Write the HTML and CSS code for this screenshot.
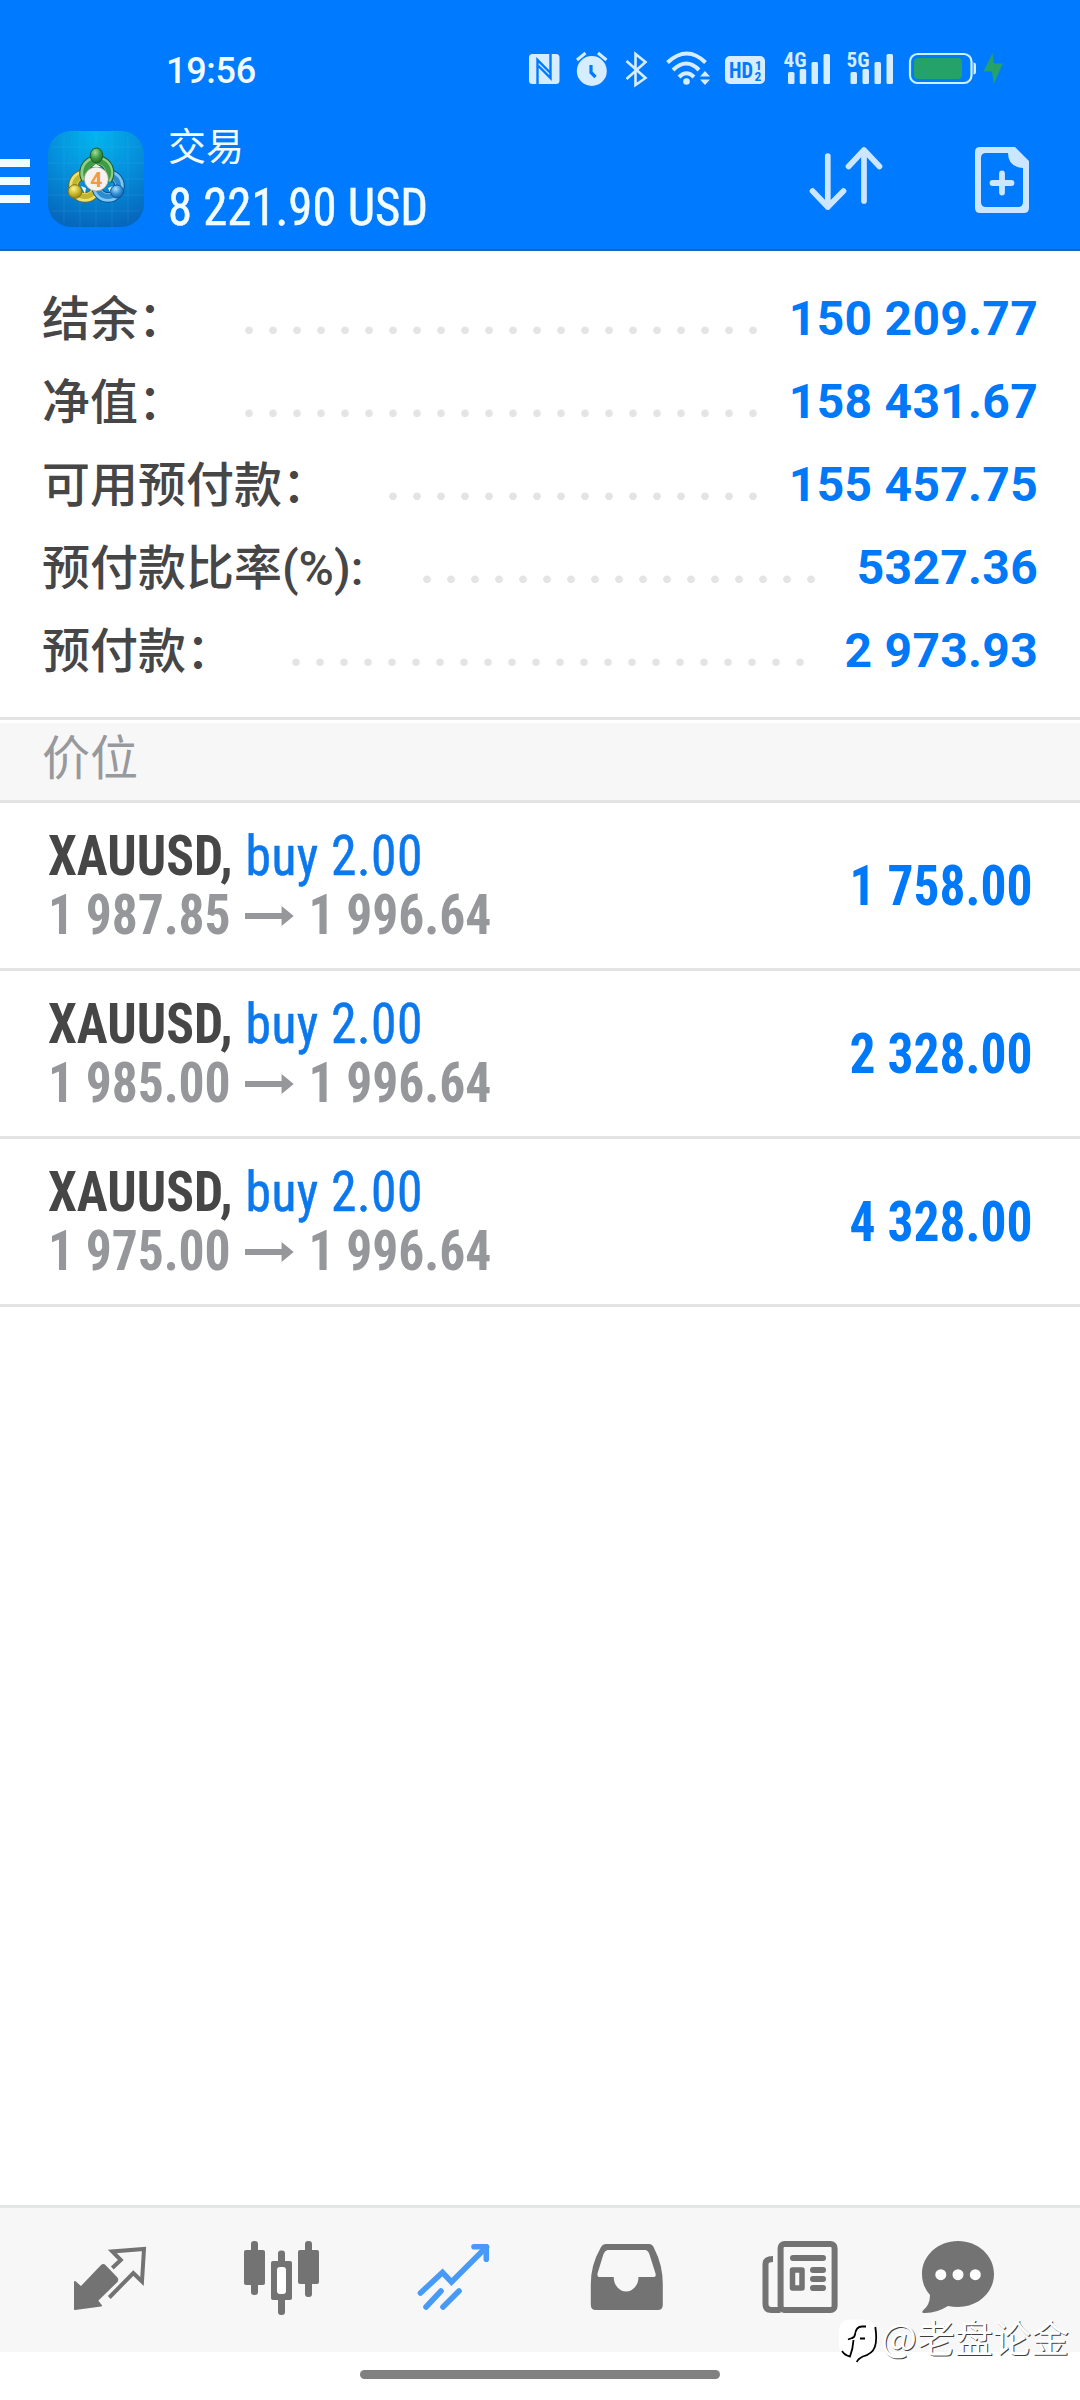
FILE: index.html
```html
<!DOCTYPE html>
<html lang="zh-CN">
<head>
<meta charset="utf-8">
<title>交易</title>
<link rel="stylesheet" href="styles.css">
</head>
<body>
<div class="app">
  <header class="header">
    <div class="status">
      <span class="status-time">19:56</span>
      <svg class="status-icons" width="480" height="40" viewBox="526 48 480 40" fill="#d6ecff">
        <rect x="529" y="54" width="30.5" height="30" rx="3.5"/>
        <path d="M537.5 84V60l13.500 13.500M550.500 54v24l-12-12" fill="none" stroke="#007aff" stroke-width="2.400"/>
        <ellipse cx="591.800" cy="71" rx="15" ry="15"/>
        <path d="M577 60l8.500-7M606.500 60l-8.500-7" stroke="#d6ecff" stroke-width="3"/>
        <path d="M591 65v7.500l4.500 4.500" fill="none" stroke="#007aff" stroke-width="3.200"/>
        <path d="M626.500 61l19 17L635.500 85V54l10 8-19 17" fill="none" stroke="#d6ecff" stroke-width="2.600"/>
        <g fill="none" stroke="#d6ecff" stroke-width="4">
          <path d="M667.500 62.500q19.500-18 38 0M673 70q13.500-13 26 0M679 77q7.500-7.500 15 0"/>
        </g>
        <circle cx="686.500" cy="81.500" r="3.300"/>
        <path d="M705 71l5 5.500h-10zM705 85l5-5.500h-10z"/>
        <rect x="725" y="56" width="40" height="28" rx="5"/>
        <text class="tiny" x="729" y="78" font-size="22" fill="#007aff" textLength="24" lengthAdjust="spacingAndGlyphs">HD</text>
        <text class="tiny" x="755" y="69.500" font-size="13.500" fill="#007aff">1</text>
        <text class="tiny" x="754.500" y="81" font-size="13.500" fill="#007aff">2</text>
        <text class="tiny" x="783.500" y="66.500" font-size="20" textLength="23" lengthAdjust="spacingAndGlyphs">4G</text>
        <rect x="788" y="72" width="6.500" height="12" rx="1.500"/>
        <rect x="799.700" y="69" width="6.500" height="15" rx="1.500"/>
        <rect x="811.500" y="62" width="6.500" height="22" rx="1.500"/>
        <rect x="823.500" y="54" width="6.500" height="30" rx="1.500"/>
        <text class="tiny" x="846.500" y="66.500" font-size="20" textLength="23" lengthAdjust="spacingAndGlyphs">5G</text>
        <rect x="850.500" y="72" width="6.500" height="12" rx="1.500"/>
        <rect x="862.500" y="69" width="6.500" height="15" rx="1.500"/>
        <rect x="874.500" y="62" width="6.500" height="22" rx="1.500"/>
        <rect x="886.500" y="54" width="6.500" height="30" rx="1.500"/>
        <rect x="910" y="54" width="61.500" height="29" rx="7.500" fill="none" stroke="#c8f2ff" stroke-width="2.200"/>
        <rect x="914" y="58" width="48" height="21" rx="4" fill="#25a269"/>
        <path d="M973.500 62.500q2.500 0 2.500 3v6q0 3-2.500 3z"/>
        <path d="M992.500 53l-9 18.500h8.500L993.800 84l9-20.500h-9z" fill="#25a269"/>
      </svg>
    </div>
    <div class="bar">
      <svg class="menu" width="30" height="48" viewBox="0 157 30 48" fill="#f0fcff"><path d="M0 159h30v8H0zM0 177h30v8H0zM0 195h30v8H0z"/></svg>
      <svg class="logo" width="96" height="96" viewBox="0 0 96 96">
        <defs>
          <radialGradient id="sky" cx=".5" cy=".05" r=".95"><stop offset="0" stop-color="#02b5ec"/><stop offset=".5" stop-color="#0590dc"/><stop offset="1" stop-color="#0668bd"/></radialGradient>
          <radialGradient id="green" cx=".4" cy=".3" r=".8"><stop offset="0" stop-color="#a5dc9d"/><stop offset=".5" stop-color="#3c9b42"/><stop offset="1" stop-color="#14651f"/></radialGradient>
          <radialGradient id="gold" cx=".4" cy=".3" r=".8"><stop offset="0" stop-color="#fff58c"/><stop offset=".5" stop-color="#c9b92c"/><stop offset="1" stop-color="#857413"/></radialGradient>
          <radialGradient id="blue" cx=".4" cy=".3" r=".8"><stop offset="0" stop-color="#a8e0ff"/><stop offset=".5" stop-color="#3593d6"/><stop offset="1" stop-color="#0b559d"/></radialGradient>
        </defs>
        <rect width="96" height="96" rx="23" fill="url(#sky)"/>
        <path d="M16 4v88M32 0v96M48 0v96M64 0v96M80 4v88M4 16h88M0 32h96M0 48h96M0 64h96M4 80h88" stroke="#55b8ee" stroke-opacity=".16" fill="none"/>
        <g fill="none">
          <circle cx="37" cy="55" r="11.500" stroke="#716b1c" stroke-width="10.500"/>
          <circle cx="37" cy="55" r="11.500" stroke="#ece06a" stroke-width="8.500"/>
          <circle cx="37" cy="55" r="10.500" stroke="#c4b52e" stroke-width="5"/>
          <circle cx="60" cy="55" r="11.500" stroke="#0b4e8e" stroke-width="10.500"/>
          <circle cx="60" cy="55" r="11.500" stroke="#7cc8f3" stroke-width="8.500"/>
          <circle cx="60" cy="55" r="10.500" stroke="#2d8bd0" stroke-width="5"/>
          <path d="M38 48a12.500 12.500 0 1 1 21 1" stroke="#1b5d2a" stroke-width="10"/>
          <path d="M38 48a12.500 12.500 0 1 1 21 1" stroke="#8fcd88" stroke-width="8"/>
          <path d="M39 47a11.500 11.500 0 1 1 19 2" stroke="#3f9c42" stroke-width="5"/>
        </g>
        <path d="M44 36l4-3 5 3zM33 55l5 2-1 6zM60 57l5-2-2 8z" fill="#eefae0"/>
        <ellipse cx="48.500" cy="24.500" rx="6.300" ry="7.500" fill="url(#green)" stroke="#1b5d2a"/>
        <circle cx="27" cy="60.500" r="6.800" fill="url(#gold)" stroke="#857413"/>
        <circle cx="69" cy="60.500" r="6.500" fill="url(#blue)" stroke="#0b559d"/>
        <circle cx="48.300" cy="48" r="12" fill="#f6f2f0" stroke="#9b8f78" stroke-width=".6"/>
        <text class="four" x="48.300" y="55.500" text-anchor="middle" font-size="21" fill="#f19a45">4</text>
      </svg>
      <div class="titles">
        <div class="title">交易</div>
        <div class="profit">8 221.90 USD</div>
      </div>
      <svg class="sort" width="76" height="66" viewBox="808 146 76 66" fill="none" stroke="#cce6ff" stroke-width="5.700" stroke-linecap="round" stroke-linejoin="round"><path d="M827.800 156v51M812.500 191l15.300 16 15.700-16M864 201V150M848.500 166.500L864 150l15.500 16.500"/></svg>
      <svg class="new" width="54" height="66" viewBox="975 146 54 66"><path fill="#cce6ff" fill-rule="evenodd" d="M980 146h35l14 14v47q0 5-5 5h-44q-5 0-5-5v-56q0-5 5-5zm6 6q-5 0-5 5v44q0 5 5 5h32q5 0 5-5v-34q-15-1-15-15z"/><path d="M1002 172.500v19M992.500 182h19" stroke="#cce6ff" stroke-width="5.800" stroke-linecap="round"/></svg>
    </div>
  </header>

  <section class="account">
    <div class="row"><span>结余：</span><i class="dots" style="width:528px"></i><b class="wide">150 209.77</b></div>
    <div class="row"><span>净值：</span><i class="dots" style="width:528px"></i><b class="wide">158 431.67</b></div>
    <div class="row"><span>可用预付款：</span><i class="dots" style="width:384px"></i><b class="wide">155 457.75</b></div>
    <div class="row"><span>预付款比率(%):</span><i class="dots" style="width:408px"></i><b class="narrow">5327.36</b></div>
    <div class="row"><span>预付款：</span><i class="dots" style="width:528px"></i><b class="medium">2 973.93</b></div>
  </section>

  <h2 class="section">价位</h2>

  <main class="orders">
    <article class="order">
      <div><div class="line"><b>XAUUSD,</b> <span class="side">buy 2.00</span></div>
      <div class="line prices">1 987.85 <svg class="arrow" width="52" height="20" viewBox="0 0 52 20"><path d="M0 7h39V0l13 10-13 10v-7H0z"/></svg> 1 996.64</div></div>
      <div class="gain">1 758.00</div>
    </article>
    <article class="order">
      <div><div class="line"><b>XAUUSD,</b> <span class="side">buy 2.00</span></div>
      <div class="line prices">1 985.00 <svg class="arrow" width="52" height="20" viewBox="0 0 52 20"><path d="M0 7h39V0l13 10-13 10v-7H0z"/></svg> 1 996.64</div></div>
      <div class="gain">2 328.00</div>
    </article>
    <article class="order">
      <div><div class="line"><b>XAUUSD,</b> <span class="side">buy 2.00</span></div>
      <div class="line prices">1 975.00 <svg class="arrow" width="52" height="20" viewBox="0 0 52 20"><path d="M0 7h39V0l13 10-13 10v-7H0z"/></svg> 1 996.64</div></div>
      <div class="gain">4 328.00</div>
    </article>
  </main>

  <nav class="tabs">
    <svg width="172" height="144" viewBox="23 2208 172 144"><path d="M75 2282l6 5.500 20.500-21.500q1.800-1.700 3.500 0l11.500 12q1.500 1.700 0 3.500L97 2300.500l4 5-26 3.500z" fill="#737373" stroke="#737373" stroke-width="2" stroke-linejoin="round"/><path d="M112.300 2268l8.500-8-8.500-8.500 31.700-2.500-2 32.500-8.700-8.500-24 24.500" fill="none" stroke="#737373" stroke-width="4"/></svg>
    <svg width="172" height="144" viewBox="195 2208 172 144" fill="#737373"><rect x="251" y="2241" width="7" height="54" rx="3"/><rect x="244" y="2250" width="21" height="35" rx="2"/><rect x="305" y="2241" width="7" height="56" rx="3"/><rect x="298" y="2250" width="21" height="34" rx="2"/><rect x="278" y="2250.500" width="7" height="64.500" rx="3"/><rect x="271" y="2261" width="21" height="39" rx="2"/><rect x="277" y="2267" width="9" height="27" rx="3" fill="#fff"/></svg>
    <svg width="173" height="144" viewBox="367 2208 173 144" fill="none" stroke="#479bf6" stroke-width="5.600" stroke-linecap="round"><path d="M420.500 2293l22-20.500 9 9.500 35-35"/><path d="M474 2246.800h12.300v12.500" stroke-linejoin="round"/><path d="M426 2307l15-16M443 2307l16-16"/></svg>
    <svg width="177" height="144" viewBox="540 2208 177 144"><path fill="#737373" fill-rule="evenodd" d="M606 2244h43q3.500 0 5 4 8.800 17 8.800 36v21q0 5-5 5h-62q-5 0-5-5v-21q0-19 9.700-36 2-4 5.500-4zm1.500 6q-2.500.5-4 4l-6 19.500q-.5 3.500 2.500 3.500h13.700a12.400 14.500 0 0 0 24.800 0H653q3.500 0 2.500-3.500l-6-19q-1.200-4-4-4.500z"/></svg>
    <svg width="166" height="144" viewBox="717 2208 166 144" fill="none" stroke="#737373"><rect x="780.600" y="2244" width="54" height="66" rx="4" stroke-width="6"/><path d="M773 2259q-7.500 0-7.500 5v40q0 6 6 6h9" stroke-width="6"/><path d="M793 2258h30M813 2270h10M813 2279h10M813 2288h10" stroke-width="6" stroke-linecap="round"/><rect x="792.500" y="2270" width="9.500" height="18" stroke-width="5.500" stroke-linejoin="round"/></svg>
    <svg width="150" height="144" viewBox="883 2208 150 144"><path fill="#737373" d="M958 2241c20 0 36 14.500 36 33s-16 33-36 33q-5 0-10-1-12 7.500-24 7-3 0-1-2.500 7-5.500 7-15.500-8-9-8-21c0-18.500 16-33 36-33z"/><g fill="#fff"><circle cx="940.800" cy="2274.700" r="5.500"/><circle cx="958" cy="2274.700" r="5.500"/><circle cx="975.300" cy="2274.700" r="5.500"/></g></svg>
  </nav>
  <footer class="gesture"><i class="pill"></i></footer>

  <div class="watermark">
    <svg width="40" height="46" viewBox="838 2319 40 46"><path d="M851 2320.500h13q12 0 12 12v11q0 12-13 14l-6 6 1-5h-7q-12 0-12-12v-14q0-12 12-12z" fill="#fff"/><path d="M875.300 2328q2 13-.5 20t-12 9.500q-5 2.500-6 5.500M842 2352q3 4.500 8 5.500 3-8 3.500-16.500M866 2327.500h-4q-6 0-7 8-.5 3-3 3.500l-4 1.500M860 2339.500h5" fill="none" stroke="#000" stroke-width="1.800"/></svg>
    <span>@老盘论金</span>
  </div>
</div>
</body>
</html>
```
FILE: styles.css
```css
* { box-sizing: border-box; }
body { margin: 0; background: #fff; font-family: Roboto, "Noto Sans CJK SC", sans-serif; color: #464646; }
svg { display: block; flex: none; }
.app { position: relative; width: 1080px; height: 2400px; display: flex; flex-direction: column; overflow: hidden; }

.header { height: 251px; background: #007aff; border-bottom: 2px solid #1766c0; color: #f2fcff; }
.status { height: 110px; display: flex; align-items: center; padding: 28px 0 0 166px; }
.status-time { width: 360px; padding-top: 4px; font-size: 36px; font-weight: 500; letter-spacing: -.3px; }
.status-icons { margin-bottom: 2px; }
.tiny { font-family: Roboto, sans-serif; font-weight: 700; font-stretch: 75%; }
.four { font-family: Roboto, sans-serif; font-weight: 700; }
.bar { height: 139px; display: flex; align-items: center; }
.menu { margin-top: 3px; }
.logo { margin: 0 0 2px 18px; }
.titles { width: 640px; margin: 0 0 6px 24px; }
.title { font-size: 38px; line-height: 62px; }
.profit { width: max-content; font-size: 51px; line-height: 60px; font-weight: 400; font-stretch: 75%; -webkit-text-stroke: .5px currentColor; transform: scaleX(.956); transform-origin: left; }
.sort { margin-bottom: 1px; }
.new { margin-left: 91px; }

.account { padding: 26px 42px 25px; }
.row { height: 83px; display: flex; line-height: 83px; font-size: 48px; font-weight: 500; white-space: nowrap; }
.row > span { padding-top: 1px; }
.row b { color: #0079f8; font-weight: 700; letter-spacing: .3px; text-align: right; }
.wide { width: 273.500px; }
.narrow { width: 214.700px; }
.medium { width: 225.700px; }
.dots { margin-left: auto; background: radial-gradient(circle at 12px 53.300px, #e4e4e4 3.400px, transparent 4.200px) 0 0 / 24px 83px; }

.section { height: 86px; margin: 0; padding-left: 42px; border: solid #e3e3e3; border-width: 3px 0; background: #f7f7f7; box-shadow: inset 0 3px #fff; font-size: 48px; line-height: 77px; font-weight: 400; color: #98999d; }

.orders { flex: 1; }
.order { height: 168px; padding: 24px 48px 0 48px; border-bottom: 3px solid #e3e3e3; display: flex; justify-content: space-between; font-size: 55px; line-height: 59px; font-stretch: 75%; white-space: nowrap; }
.line { height: 59px; transform: scaleX(.938); transform-origin: left; }
.side { margin-left: 1px; color: #0c78ee; font-weight: 400; letter-spacing: .5px; -webkit-text-stroke: .5px currentColor; }
.prices { color: #96979b; font-weight: 700; letter-spacing: -.1px; }
.arrow { display: inline-block; margin: 0 3px; vertical-align: 8px; fill: #96979b; }
.gain { margin-top: 30px; height: 59px; color: #0079f8; font-weight: 700; transform: scaleX(.936); transform-origin: right; }

.tabs { height: 147px; padding-left: 23px; border-top: 3px solid #e4e5e5; background: #f7f7f7; display: flex; }
.gesture { height: 48px; padding-top: 18px; }
.pill { display: block; width: 360px; height: 9px; margin: 0 auto; border-radius: 5px; background: #808080; }

.watermark { position: absolute; left: 838px; top: 2307px; height: 57px; display: flex; align-items: flex-end; gap: 3px; color: #fff; font-size: 38px; line-height: 57px; white-space: nowrap; text-shadow: 1px 1px .5px rgba(0, 0, 0, .75); font-family: "Noto Sans CJK SC", sans-serif; font-weight: 400; }
```
